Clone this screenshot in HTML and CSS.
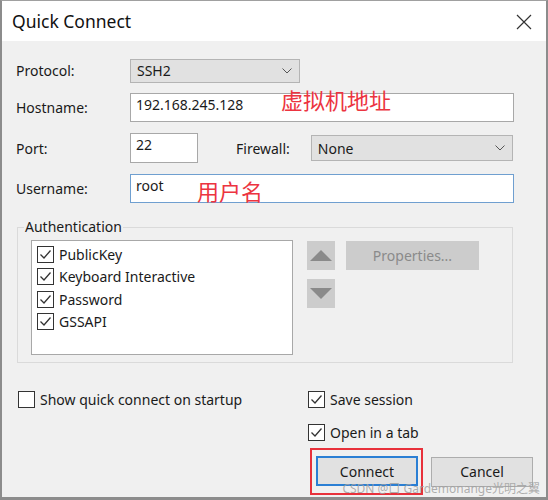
FILE: index.html
```html
<!DOCTYPE html>
<html lang="en">
<head>
    <meta charset="UTF-8">
    <title>Quick Connect</title>
    <link rel="stylesheet" href="styles.css">
</head>
<body>

<div class="window">
    <div class="titlebar">
        <span class="title">Quick Connect</span>
        <svg class="close" width="16" height="16" viewBox="0 0 16 16">
            <path d="M1 1 L15 15 M15 1 L1 15" stroke="#333" stroke-width="1.2" fill="none"/>
        </svg>
    </div>

    <div class="content">
        <div class="row row-protocol">
            <span class="label">Protocol:</span>
            <div class="select protocol-select">
                <span>SSH2</span>
                <svg class="chevron" width="10" height="6" viewBox="0 0 10 6"><path d="M0.5 0.5 L5 5 L9.5 0.5" stroke="#555" fill="none"/></svg>
            </div>
        </div>

        <div class="row row-host">
            <span class="label">Hostname:</span>
            <div class="textbox host-input">192.168.245.128</div>
            <span class="note note-host">虚拟机地址</span>
        </div>

        <div class="row row-port">
            <span class="label">Port:</span>
            <div class="textbox port-input">22</div>
            <span class="label firewall-label">Firewall:</span>
            <div class="select firewall-select">
                <span>None</span>
                <svg class="chevron" width="10" height="6" viewBox="0 0 10 6"><path d="M0.5 0.5 L5 5 L9.5 0.5" stroke="#555" fill="none"/></svg>
            </div>
        </div>

        <div class="row row-user">
            <span class="label">Username:</span>
            <div class="textbox user-input">root</div>
            <span class="note note-user">用户名</span>
        </div>

        <fieldset class="auth">
            <legend>Authentication</legend>
            <div class="auth-body">
                <div class="auth-list">
                    <div class="check-row"><span class="checkbox checked"></span>PublicKey</div>
                    <div class="check-row"><span class="checkbox checked"></span>Keyboard Interactive</div>
                    <div class="check-row"><span class="checkbox checked"></span>Password</div>
                    <div class="check-row"><span class="checkbox checked"></span>GSSAPI</div>
                </div>
                <div class="arrows">
                    <div class="arrow-btn"><span class="tri tri-up"></span></div>
                    <div class="arrow-btn"><span class="tri tri-down"></span></div>
                </div>
                <div class="btn btn-disabled">Properties...</div>
            </div>
        </fieldset>

        <div class="bottom">
            <div class="bottom-left">
                <div class="check-row"><span class="checkbox"></span>Show quick connect on startup</div>
            </div>
            <div class="bottom-right">
                <div class="check-row"><span class="checkbox checked"></span>Save session</div>
                <div class="check-row tab-row"><span class="checkbox checked"></span>Open in a tab</div>
                <div class="actions">
                    <div class="highlight">
                        <div class="btn btn-default">Connect</div>
                    </div>
                    <div class="btn">Cancel</div>
                </div>
            </div>
        </div>
    </div>

    <div class="watermark">CSDN @口 Gardemonange光明之翼</div>
</div>

</body>
</html>
```

FILE: styles.css
```css
body {
    margin: 0;
    font-family: "Noto Sans", "Noto Sans CJK SC", sans-serif;
    font-size: 14px;
    color: #1a1a1a;
}

.window {
    position: relative;
    width: 548px;
    height: 500px;
    box-sizing: border-box;
    overflow: hidden;
    background-color: #f0f0f0;
    border: 2px solid #8c8c8c;
    border-top: 1px solid #a0a0a0;
    border-bottom-width: 3px;
}

.titlebar {
    height: 40px;
    background-color: #fff;
    display: flex;
    align-items: center;
    justify-content: space-between;
    padding: 0 14px 0 10px;
}

.title {
    font-size: 17.5px;
    color: #111;
}

.close {
    margin-top: 2px;
}

.content {
    padding: 16px 0 0 14px;
}

.row {
    position: relative;
    display: flex;
    align-items: center;
}

.label {
    width: 114px;
    flex-shrink: 0;
}

.row-protocol {
    height: 27px;
}

.row-host {
    height: 29px;
    margin-top: 9px;
}

.row-port {
    height: 30px;
    margin-top: 11px;
}

.row-user {
    height: 29px;
    margin-top: 11px;
}

/* combo boxes */
.select {
    display: flex;
    align-items: center;
    justify-content: space-between;
    box-sizing: border-box;
    height: 24px;
    padding: 0 7px 0 6px;
    background-color: #e1e1e1;
    border: 1px solid #b4b4b4;
}

.protocol-select {
    width: 170px;
}

.firewall-select {
    width: 202px;
    height: 26px;
}

.firewall-label {
    width: auto;
    margin: 0 21px 0 38px;
}

/* text boxes */
.textbox {
    box-sizing: border-box;
    height: 100%;
    padding: 2px 5px;
    line-height: 18px;
    background-color: #fff;
    border: 1px solid #a8a8a8;
}

.host-input {
    width: 384px;
}

.port-input {
    width: 68px;
}

.user-input {
    width: 384px;
    border-color: #6f9fd0;
}

/* red annotations drawn over the form */
.note {
    position: absolute;
    color: #ec3440;
    font-family: "Noto Sans CJK SC", sans-serif;
    font-size: 22px;
    line-height: 1;
}

.note-host {
    left: 265px;
    top: -5px;
}

.note-user {
    left: 181px;
    top: 5px;
}

/* authentication group */
.auth {
    width: 496px;
    box-sizing: border-box;
    margin: 14px 0 0 1px;
    padding: 3px 0 7px 13px;
    border: 1px solid #dadada;
}

.auth legend {
    padding: 0 1px;
    margin-left: -7px;
    line-height: 20px;
}

.auth-body {
    display: flex;
    align-items: flex-start;
}

.auth-list {
    width: 262px;
    height: 115px;
    box-sizing: border-box;
    padding: 2px 5px;
    background-color: #fff;
    border: 1px solid #a8a8a8;
}

.check-row {
    display: flex;
    align-items: center;
    height: 22px;
}

.auth-list .check-row {
    height: 22.5px;
}

.checkbox {
    width: 17px;
    height: 17px;
    box-sizing: border-box;
    margin-right: 5px;
    border: 1px solid #333;
    background: #fff;
    flex-shrink: 0;
}

.checkbox.checked {
    background: #fff url("data:image/svg+xml,%3Csvg xmlns='http://www.w3.org/2000/svg' width='15' height='15'%3E%3Cpath d='M2.5 7.5 L6 11 L12.5 3.5' stroke='%23333' stroke-width='1.3' fill='none'/%3E%3C/svg%3E") no-repeat center;
}

.arrows {
    display: flex;
    flex-direction: column;
    gap: 9px;
    margin: 1px 0 0 14px;
}

.arrow-btn {
    width: 28px;
    height: 29px;
    background-color: #cccccc;
    display: flex;
    align-items: center;
    justify-content: center;
}

.tri {
    width: 0;
    height: 0;
    border-left: 11px solid transparent;
    border-right: 11px solid transparent;
}

.tri-up {
    border-bottom: 11px solid #8a8a8a;
}

.tri-down {
    border-top: 11px solid #8a8a8a;
}

.btn {
    box-sizing: border-box;
    width: 102px;
    height: 30px;
    display: flex;
    align-items: center;
    justify-content: center;
    background-color: #e1e1e1;
    border: 1px solid #adadad;
}

.btn-disabled {
    width: 133px;
    height: 29px;
    margin: 1px 0 0 11px;
    background-color: #cccccc;
    border-color: #cccccc;
    color: #8a8a8a;
}

/* bottom options and buttons */
.bottom {
    display: flex;
    margin-top: 25px;
}

.bottom-left {
    width: 290px;
    padding-left: 2px;
}

.bottom-right {
    display: flex;
    flex-direction: column;
}

.tab-row {
    margin-top: 11px;
}

.actions {
    display: flex;
    align-items: center;
    margin: 5px 0 0 2px;
}

.highlight {
    padding: 6px 3px 7px 4px;
    border: 2px solid #e8313b;
}

.btn-default {
    border: 2px solid #2b7fd4;
}

.actions > .btn {
    margin-left: 8px;
}

.watermark {
    position: absolute;
    right: 6px;
    bottom: 0;
    font-size: 12px;
    color: rgba(160, 160, 160, 0.85);
}
```
